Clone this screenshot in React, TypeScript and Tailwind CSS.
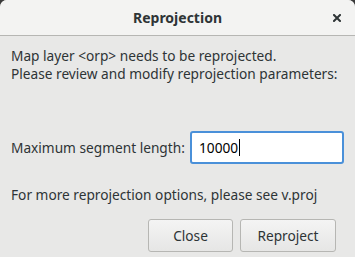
import React from 'react';

export default function App() {
  return (
    <div className="w-[355px] h-[257px] bg-[#3b3b3b] font-['Noto_Sans',sans-serif] text-[#2e3436]">
      <div className="flex h-full flex-col overflow-hidden rounded-t-[7px] bg-[#e8e8e7]">
        {/* title bar */}
        <div className="relative flex h-[36px] shrink-0 items-center justify-center border-b border-[#b6b6b3] bg-[#f3f3f2]">
          <span className="text-[14px] font-bold text-[#2e3436]">Reprojection</span>
          <svg className="absolute right-[14px] top-[14px]" width="8" height="8" viewBox="0 0 8 8">
            <path d="M1 1L7 7M7 1L1 7" stroke="#2e3436" strokeWidth="2" strokeLinecap="square" />
          </svg>
        </div>

        <div className="flex flex-1 flex-col whitespace-nowrap px-[11px] text-[13.7px] leading-[18px]">
          <p className="mt-[11px]">Map layer &lt;orp&gt; needs to be reprojected.</p>
          <p>Please review and modify reprojection parameters:</p>

          <div className="mt-[48px] flex items-center justify-between">
            <span>Maximum segment length:</span>
            <div className="flex h-[33px] w-[154px] shrink-0 items-center rounded-[3px] border-2 border-[#4a90d9] bg-white px-[7px] text-black">
              10000<span className="ml-px inline-block h-[17px] w-px bg-black" />
            </div>
          </div>

          <p className="mt-[22px]">For more reprojection options, please see v.proj</p>

          <div className="mt-[15px] flex justify-end gap-[7px] pr-[8px]">
            <button className="h-[33px] w-[85px] rounded-[3px] border border-[#b6b6b3] bg-gradient-to-b from-[#f4f4f4] to-[#e6e6e5]">Close</button>
            <button className="h-[33px] w-[96px] rounded-[3px] border border-[#b6b6b3] bg-gradient-to-b from-[#f4f4f4] to-[#e6e6e5]">Reproject</button>
          </div>
        </div>
      </div>
    </div>
  );
}
